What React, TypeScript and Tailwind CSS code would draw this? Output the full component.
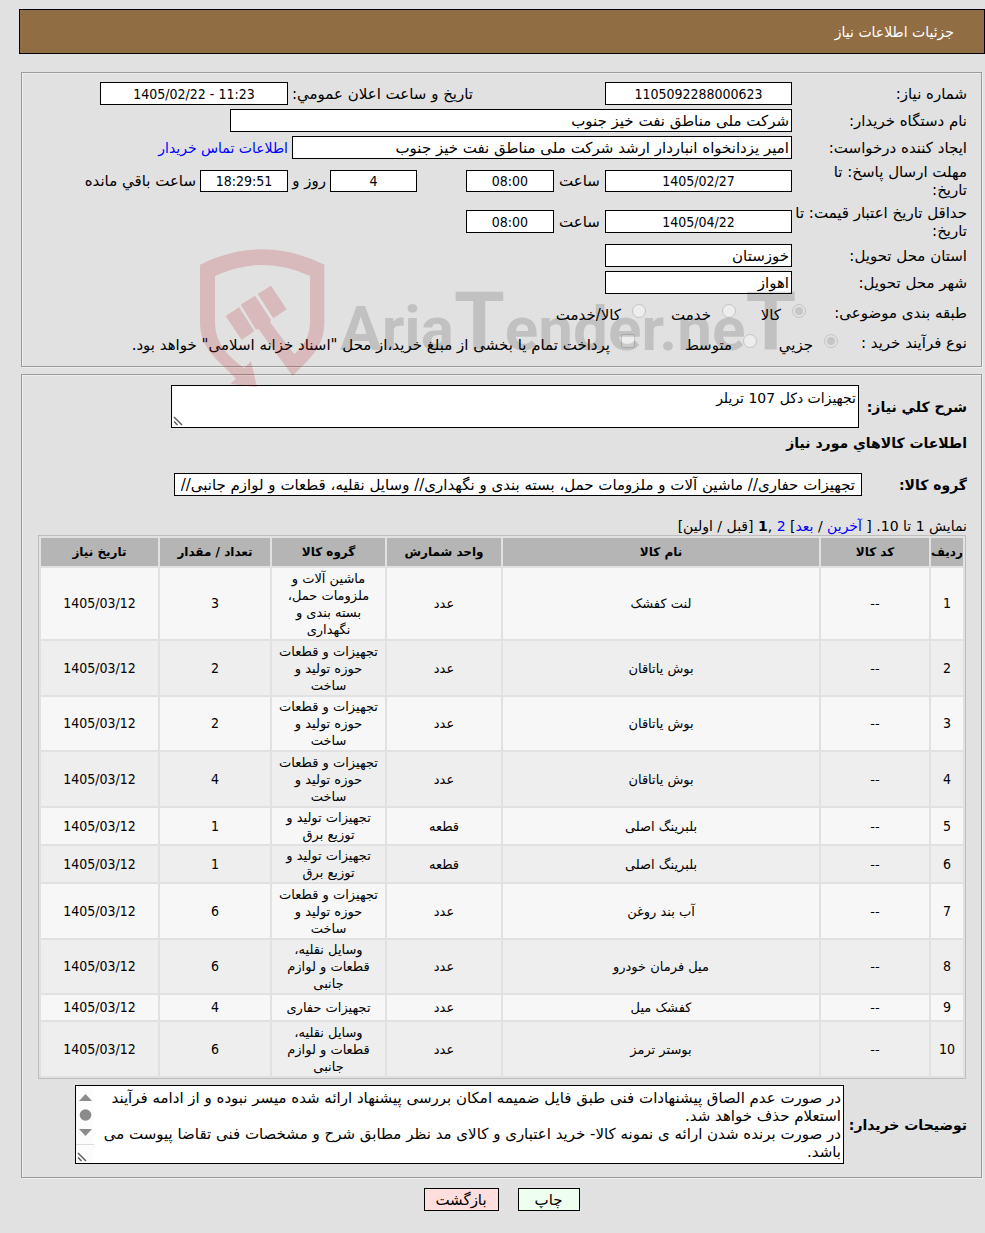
import type { ReactNode } from "react";

const field = "border border-black bg-white px-0.5 leading-[18px] outline-none";
const numeric = "text-center font-['DejaVu_Sans_Condensed','DejaVu_Sans',sans-serif] text-[14px]";

type Item = { name: string; unit: string; group: string; qty: number; height: string };

const items: Item[] = [
  { name: "لنت کفشک", unit: "عدد", group: "ماشین آلات و\nملزومات حمل،\nبسته بندی و\nنگهداری", qty: 3, height: "h-[71px]" },
  { name: "بوش یاتاقان", unit: "عدد", group: "تجهیزات و قطعات\nحوزه تولید و\nساخت", qty: 2, height: "h-[54px]" },
  { name: "بوش یاتاقان", unit: "عدد", group: "تجهیزات و قطعات\nحوزه تولید و\nساخت", qty: 2, height: "h-[53px]" },
  { name: "بوش یاتاقان", unit: "عدد", group: "تجهیزات و قطعات\nحوزه تولید و\nساخت", qty: 4, height: "h-[54px]" },
  { name: "بلبرینگ اصلی", unit: "قطعه", group: "تجهیزات تولید و\nتوزیع برق", qty: 1, height: "h-9" },
  { name: "بلبرینگ اصلی", unit: "قطعه", group: "تجهیزات تولید و\nتوزیع برق", qty: 1, height: "h-9" },
  { name: "آب بند روغن", unit: "عدد", group: "تجهیزات و قطعات\nحوزه تولید و\nساخت", qty: 6, height: "h-[54px]" },
  { name: "میل فرمان خودرو", unit: "عدد", group: "وسایل نقلیه،\nقطعات و لوازم\nجانبی", qty: 6, height: "h-[53px]" },
  { name: "کفشک میل", unit: "عدد", group: "تجهیزات حفاری", qty: 4, height: "h-[25px]" },
  { name: "بوستر ترمز", unit: "عدد", group: "وسایل نقلیه،\nقطعات و لوازم\nجانبی", qty: 6, height: "h-[54px]" },
];

const buyerNotes =
  "در صورت عدم الصاق پیشنهادات فنی طبق فایل ضمیمه امکان بررسی پیشنهاد ارائه شده میسر نبوده و از ادامه فرآیند استعلام حذف خواهد شد.\nدر صورت برنده شدن ارائه ی نمونه کالا- خرید اعتباری و کالای مد نظر مطابق شرح و مشخصات فنی تقاضا پیوست می باشد.";

function Panel({ children, className }: { children: ReactNode; className: string }) {
  return (
    <section className={`relative border border-[#9a9a9a] shadow-[inset_1px_1px_0_#efefef,1px_1px_0_#efefef] ${className}`}>
      {children}
    </section>
  );
}

function Row({ id, label, height, children }: { id: string; label: ReactNode; height: string; children: ReactNode }) {
  return (
    <div className={`flex items-center ${height}`}>
      <label htmlFor={id} className="w-[175px] shrink-0 whitespace-nowrap">{label}</label>
      {children}
    </div>
  );
}

function Choice({ id, type, name, label, checked, className }: { id: string; type: "radio" | "checkbox"; name: string; label: string; checked?: boolean; className: string }) {
  return (
    <span className={`flex shrink-0 items-center gap-[11px] ${className}`}>
      <input
        id={id}
        type={type}
        name={name}
        defaultChecked={checked}
        disabled
        className={
          type === "radio"
            ? "mb-1 size-3.5 shrink-0 appearance-none rounded-full border border-[#c4c4c4] bg-[#ededed] checked:p-0.5 checked:bg-[#c6c6c6] checked:bg-clip-content"
            : "mb-1 size-3.5 shrink-0 appearance-none rounded-xs border border-[#c4c4c4] bg-[#ededed]"
        }
      />
      <label htmlFor={id} className="pt-1 whitespace-nowrap">{label}</label>
    </span>
  );
}

function Grip() {
  return (
    <svg viewBox="0 0 10 10" className="pointer-events-none absolute bottom-0.5 left-0.5 size-2.5" stroke="#555" strokeWidth="1.4" fill="none">
      <path d="M1 1l8 8M1 5.500l3.500 3.500" />
    </svg>
  );
}

function Watermark() {
  return (
    <div dir="ltr" aria-hidden="true" className="pointer-events-none absolute top-[169px] left-[168px] z-10 flex items-start">
      <svg viewBox="0 0 450 450" className="size-[150px] shrink-0" fill="#b81c28" fillOpacity="0.2">
        <path d="M30 68Q216-24 403 68V240C403 320 355 352 308 402L205 260 198 263 152 188 195 161 243 234 240 241 313 337C345 305 360 285 360 235V102Q216 36 75 102V240C75 300 110 340 162 378L183 358 201 436 121 425 138 410C80 350 30 320 30 240Z" />
        <path d="M107 222L147 196 193 267 155 294ZM203 156L243 131 290 202 250 229Z" />
      </svg>
      <span className="mt-[39px] font-[Roboto,sans-serif] text-[62px] leading-[82px] font-bold text-black/14">
        Aria<span className="text-[82px]">T</span>ender.ne<span className="text-[82px]">T</span>
      </span>
    </div>
  );
}

export default function App() {
  return (
    <div dir="rtl" lang="fa" className="min-h-screen bg-[#e1e1e1] pt-[9px] pb-5 font-['DejaVu_Sans',sans-serif] text-[15px] leading-[18px] text-black">
      <header className="ml-[19px] flex h-[45px] items-center border border-black bg-[#906d42] pr-[30px] text-white">
        <h1 className="text-[14px]">جزئیات اطلاعات نیاز</h1>
      </header>

      <main className="mt-[18px] mr-[3px] ml-[21px]">
        <Panel className="h-[295px] pt-[7px] pr-3.5">
          <Row id="need-no" label="شماره نیاز:" height="h-[27px]">
            <input id="need-no" readOnly defaultValue="1105092288000623" className={`${field} ${numeric} h-[23px] w-[187px]`} />
            <label htmlFor="announced" className="w-[317px] pl-1 text-left">تاریخ و ساعت اعلان عمومي:</label>
            <input id="announced" readOnly dir="ltr" defaultValue="1405/02/22 - 11:23" className={`${field} ${numeric} h-[23px] w-[188px]`} />
          </Row>
          <Row id="buyer" label="نام دستگاه خریدار:" height="h-[27px]">
            <input id="buyer" readOnly defaultValue="شرکت ملی مناطق نفت خیز جنوب" className={`${field} h-[23px] w-[562px]`} />
          </Row>
          <Row id="creator" label="ایجاد کننده درخواست:" height="h-[27px]">
            <input id="creator" readOnly defaultValue="امیر یزدانخواه انباردار ارشد شرکت ملی مناطق نفت خیز جنوب" className={`${field} h-[23px] w-[500px]`} />
            <a href="#contact" className="mr-1 text-[14px] text-[#0000ff]">اطلاعات تماس خریدار</a>
          </Row>
          <Row id="deadline" label={<>مهلت ارسال پاسخ: تا<br />تاریخ:</>} height="h-10">
            <input id="deadline" readOnly defaultValue="1405/02/27" className={`${field} ${numeric} h-[22px] w-[187px]`} />
            <label htmlFor="deadline-hour" className="w-[51px] text-center">ساعت</label>
            <input id="deadline-hour" readOnly defaultValue="08:00" className={`${field} ${numeric} h-[22px] w-[88px]`} />
            <input id="days-left" readOnly defaultValue="4" className={`${field} ${numeric} mr-[49px] h-[22px] w-[87px]`} />
            <label htmlFor="days-left" className="w-[42px] pr-1 whitespace-nowrap">روز و</label>
            <input id="time-left" readOnly defaultValue="18:29:51" className={`${field} ${numeric} h-[22px] w-[88px] bg-[#ffffec]`} />
            <label htmlFor="time-left" className="mr-1 whitespace-nowrap">ساعت باقي مانده</label>
          </Row>
          <Row id="price-valid" label={<>حداقل تاریخ اعتبار قیمت: تا<br />تاریخ:</>} height="h-[41px]">
            <input id="price-valid" readOnly defaultValue="1405/04/22" className={`${field} ${numeric} h-[23px] w-[187px]`} />
            <label htmlFor="price-hour" className="w-[51px] text-center">ساعت</label>
            <input id="price-hour" readOnly defaultValue="08:00" className={`${field} ${numeric} h-[23px] w-[88px]`} />
          </Row>
          <Row id="province" label="استان محل تحویل:" height="h-[27px]">
            <input id="province" readOnly defaultValue="خوزستان" className={`${field} h-[23px] w-[187px]`} />
          </Row>
          <Row id="city" label="شهر محل تحویل:" height="h-[27px]">
            <input id="city" readOnly defaultValue="اهواز" className={`${field} h-[23px] w-[187px]`} />
          </Row>
          <div role="radiogroup" aria-label="طبقه بندی موضوعی" className="mt-0.5 flex h-[30px] items-center">
            <span className="w-[161px] shrink-0">طبقه بندی موضوعی:</span>
            <Choice id="cat-goods" type="radio" name="category" label="کالا" checked className="w-[70px]" />
            <Choice id="cat-service" type="radio" name="category" label="خدمت" className="w-[90px]" />
            <Choice id="cat-both" type="radio" name="category" label="کالا/خدمت" className="" />
          </div>
          <div role="radiogroup" aria-label="نوع فرآیند خرید" className="flex h-[30px] items-center">
            <span className="w-[129px] shrink-0">نوع فرآیند خرید :</span>
            <Choice id="size-small" type="radio" name="size" label="جزیي" checked className="w-[81px]" />
            <Choice id="size-mid" type="radio" name="size" label="متوسط" className="w-[122px]" />
            <Choice id="treasury" type="checkbox" name="treasury" label={'پرداخت تمام یا بخشی از مبلغ خرید،از محل "اسناد خزانه اسلامی" خواهد بود.'} className="" />
          </div>
          <Watermark />
        </Panel>

        <Panel className="mt-[7px] pt-2.5 pr-3.5 pb-[13px] pl-4">
          <div className="flex items-center">
            <label htmlFor="summary" className="ml-1 w-[104px] shrink-0 text-[14px] font-bold whitespace-nowrap">شرح کلي نیاز:</label>
            <div className="relative">
              <textarea id="summary" readOnly defaultValue="تجهیزات دکل 107 تریلر" className={`${field} block h-[43px] w-[688px] resize-none py-[3px] text-[14px]`} />
              <Grip />
            </div>
          </div>
          <h2 className="mt-1.5 text-[14px] font-bold">اطلاعات کالاهاي مورد نیاز</h2>
          <div className="mt-[21px] flex items-center">
            <label htmlFor="group" className="w-[105px] shrink-0 text-[14px] font-bold">گروه کالا:</label>
            <input id="group" readOnly defaultValue="تجهیزات حفاری// ماشین آلات و ملزومات حمل، بسته بندی و نگهداری// وسایل نقلیه، قطعات و لوازم جانبی//" className={`${field} h-[23px] w-[688px] px-1.5`} />
          </div>

          <nav className="mt-[21px] text-[14px]">
            نمایش 1 تا 10. [ <a href="#last" className="text-[#0000ff]">آخرین</a> / <a href="#next" className="text-[#0000ff]">بعد</a>] <a href="#2" className="text-[#0000ff]">2</a> ,<b>1</b> [قبل / اولین]
          </nav>
          <div className="pr-px">
            <table className="w-full table-fixed border-separate border-spacing-[2px] border border-[#bdbdbd] text-center text-[13px] leading-[17px]">
              <thead>
                <tr className="h-7 bg-[#b5b5b5] text-[12px]">
                  <th className="w-8 whitespace-nowrap">ردیف</th>
                  <th className="w-[108px]">کد کالا</th>
                  <th>نام کالا</th>
                  <th className="w-[114px]">واحد شمارش</th>
                  <th className="w-[113px]">گروه کالا</th>
                  <th className="w-[110px]">تعداد / مقدار</th>
                  <th className="w-[117px]">تاریخ نیاز</th>
                </tr>
              </thead>
              <tbody>
                {items.map((item, i) => (
                  <tr key={i} className={`${item.height} odd:bg-[#f7f7f7] even:bg-[#eeeeee]`}>
                    <td className={numeric}>{i + 1}</td>
                    <td>--</td>
                    <td>{item.name}</td>
                    <td>{item.unit}</td>
                    <td className="whitespace-pre">{item.group}</td>
                    <td className={numeric}>{item.qty}</td>
                    <td className={numeric}>1405/03/12</td>
                  </tr>
                ))}
              </tbody>
            </table>
          </div>

          <div className="mt-1.5 flex items-center">
            <label htmlFor="notes" className="w-[123px] shrink-0 text-[14px] font-bold whitespace-nowrap">توضیحات خریدار:</label>
            <div className="relative">
              <textarea id="notes" readOnly defaultValue={buyerNotes} className={`${field} block h-[79px] w-[769px] resize-none overflow-hidden py-[3px] pl-5`} />
              <svg viewBox="0 0 18 77" className="pointer-events-none absolute top-px left-px h-[77px] w-[18px]">
                <path d="M0 0h18v77H0z" fill="#fcfcfc" />
                <path d="M0 58.500h18" stroke="#dcdcdc" />
                <path d="M3 15l6.500-7 6.500 7zM3 43l6.500 7 6.500-7z" fill="#8b8b8b" />
                <circle cx="9.500" cy="29" r="5.800" fill="#8b8b8b" />
              </svg>
              <Grip />
            </div>
          </div>
        </Panel>

        <div className="mt-2.5 flex justify-center gap-[19px]">
          <button type="button" className="h-[23px] w-[62px] border border-black bg-[#efffef]">چاپ</button>
          <button type="button" className="h-[23px] w-[75px] border border-black bg-[#ffdede]">بازگشت</button>
        </div>
      </main>
    </div>
  );
}
